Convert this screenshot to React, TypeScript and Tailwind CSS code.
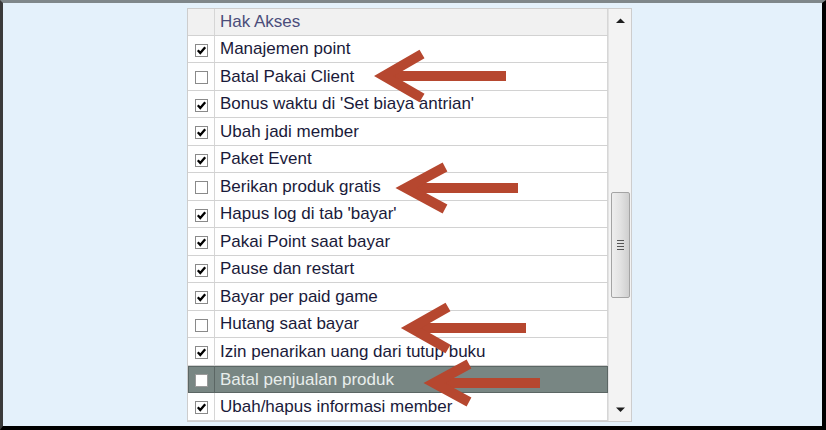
import React from "react";

type Item = { label: string; checked: boolean; selected?: boolean };

const items: Item[] = [
  { label: "Manajemen point", checked: true },
  { label: "Batal Pakai Client", checked: false },
  { label: "Bonus waktu di 'Set biaya antrian'", checked: true },
  { label: "Ubah jadi member", checked: true },
  { label: "Paket Event", checked: true },
  { label: "Berikan produk gratis", checked: false },
  { label: "Hapus log di tab 'bayar'", checked: true },
  { label: "Pakai Point saat bayar", checked: true },
  { label: "Pause dan restart", checked: true },
  { label: "Bayar per paid game", checked: true },
  { label: "Hutang saat bayar", checked: false },
  { label: "Izin penarikan uang dari tutup buku", checked: true },
  { label: "Batal penjualan produk", checked: false, selected: true },
  { label: "Ubah/hapus informasi member", checked: true },
];

const CheckBox = ({ checked, selected }: { checked: boolean; selected?: boolean }) => (
  <div
    className={
      selected
        ? "w-[13px] h-[13px] mt-[2px] border border-[#9a9a9a] bg-white"
        : "w-[13px] h-[13px] mt-[2px] border border-[#8a8a8a] bg-white flex items-center justify-center"
    }
  >
    {checked && (
      <svg width="11" height="11" viewBox="0 0 11 11">
        <path d="M1.8 5.2 L4.3 8 L9.2 2.2" fill="none" stroke="#000" strokeWidth="2.3" />
      </svg>
    )}
  </div>
);

// annotation arrows lie over the table
const Arrows = () => (
  <svg className="absolute inset-0 pointer-events-none" width="826" height="430">
    <g fill="none" stroke="#b6472f" strokeWidth="10" strokeLinejoin="miter" strokeLinecap="butt">
      <line x1="503" y1="73" x2="384" y2="73" />
      <polyline points="419,51 381,73 419,95" />
      <line x1="515" y1="185" x2="406" y2="185" />
      <polyline points="442,164 403,185 442,206" />
      <line x1="523" y1="325" x2="411" y2="325" />
      <polyline points="445,304 408,325 445,346" />
      <line x1="537" y1="380" x2="434" y2="380" />
      <polyline points="466,361 431,380 466,399" />
    </g>
  </svg>
);

export default function App() {
  return (
    <div className="relative w-[826px] h-[430px] overflow-hidden bg-[#e4f1fb] border-t-[3px] border-t-[#7f878a] border-l-[3px] border-l-[#3a3a3a] border-r-[4px] border-r-black border-b-[4px] border-b-black font-['Liberation_Sans',Arial,sans-serif]">
      <div className="pl-[184px] pt-[5px] flex">
        <div className="flex border border-[#cdcdcd] bg-white">
          <div className="w-[420px] flex flex-col">
            <div className="flex h-[27px] bg-[#f1f1f1] border-b border-[#d2d2d2]">
              <div className="w-[27px] border-r border-[#d6d6d6]" />
              <div className="flex-1 flex items-center pl-[5px] text-[17px] text-[#4b4d7a] border-r border-[#d6d6d6]">
                Hak Akses
              </div>
            </div>
            {items.map((it, i) => (
              <div
                key={it.label}
                className={
                  (i % 2 === 0 ? "h-[27px] " : "h-[28px] ") +
                  (it.selected
                    ? "flex bg-[#788683] border border-[#5b6664]"
                    : "flex border-b border-[#d2d2d2]")
                }
              >
                <div
                  className={
                    it.selected
                      ? "w-[26px] flex items-center justify-center border-r border-[#5b6664]"
                      : "w-[27px] flex items-center justify-center border-r border-[#d6d6d6]"
                  }
                >
                  <CheckBox checked={it.checked} selected={it.selected} />
                </div>
                <div
                  className={
                    it.selected
                      ? "flex-1 flex items-center pl-[5px] text-[17px] text-[#e8eeec] whitespace-nowrap"
                      : "flex-1 flex items-center pl-[5px] text-[17px] text-[#1a1a3a] whitespace-nowrap border-r border-[#d6d6d6]"
                  }
                >
                  {it.label}
                </div>
              </div>
            ))}
          </div>
          <div className="w-[23px] bg-[#f3f3f3] border-l border-[#e2e2e2] flex flex-col items-center">
            <div className="h-[24px] flex items-center justify-center">
              <svg width="9" height="6" viewBox="0 0 9 6">
                <path d="M0 5 L4.5 0.5 L9 5 Z" fill="#1e1e1e" />
              </svg>
            </div>
            <div className="h-[159px]" />
            <div className="w-[19px] h-[106px] rounded-[2px] border border-[#a4a4a4] bg-gradient-to-r from-[#eeeeee] via-[#e2e2e2] to-[#cfcfcf] flex flex-col items-center justify-center gap-[2px]">
              <div className="w-[7px] h-[1px] bg-[#555]" />
              <div className="w-[7px] h-[1px] bg-[#555]" />
              <div className="w-[7px] h-[1px] bg-[#555]" />
              <div className="w-[7px] h-[1px] bg-[#555]" />
            </div>
            <div className="flex-1" />
            <div className="h-[22px] flex items-center justify-center">
              <svg width="9" height="6" viewBox="0 0 9 6">
                <path d="M0 0.5 L4.5 5 L9 0.5 Z" fill="#1e1e1e" />
              </svg>
            </div>
          </div>
        </div>
      </div>
      <Arrows />
    </div>
  );
}
